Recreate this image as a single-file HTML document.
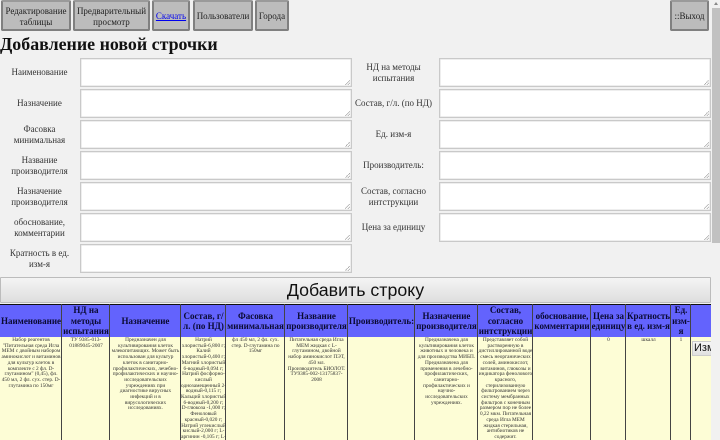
<!DOCTYPE html>
<html lang="ru"><head><meta charset="utf-8"><title>Добавление новой строчки</title>
<style>
html,body{margin:0;padding:0;width:720px;height:440px;overflow:hidden;background:#f1f1f1;}
body{font-family:"Liberation Serif","Noto Serif CJK SC",serif;color:#222;position:relative;}
#wrap{position:absolute;left:0;top:0;width:720px;height:440px;overflow:hidden;filter:blur(.35px);}
.b{position:absolute;top:0;height:25px;padding-top:2px;box-sizing:content-box;background:#bcbcbc;border:2px solid #808080;border-top-color:#9a9a9a;border-radius:2px;font-size:9px;line-height:10.2px;text-align:center;display:flex;align-items:center;justify-content:center;color:#222;}
.b a{color:#0000ee;text-decoration:underline;}
h1{position:absolute;left:0;top:34px;margin:0;font-size:17.9px;line-height:20px;font-weight:bold;color:#111;white-space:nowrap;}
.ta{position:absolute;width:270px;height:27px;background:#fff;border:1px solid #c9c9c9;box-shadow:inset 0 0 0 .5px #ddd;}
.ta:after{content:"";position:absolute;right:1px;bottom:1px;width:5px;height:5px;background:linear-gradient(135deg,transparent 45%,#aaa 45%,#aaa 55%,transparent 55%,transparent 72%,#aaa 72%,#aaa 82%,transparent 82%);}
.l{position:absolute;font-size:9px;line-height:10.2px;text-align:center;display:flex;align-items:center;justify-content:center;height:29px;color:#333;white-space:nowrap;}
#add{position:absolute;left:0;top:277px;width:711px;height:26px;box-sizing:border-box;background:linear-gradient(#f4f4f4,#dedede);border:1px solid #bcbcbc;font-family:"Liberation Sans",sans-serif;font-size:17.8px;line-height:24px;text-align:center;color:#111;border-radius:1px;}
#sb{position:absolute;left:712px;top:0;width:8px;height:243px;background:#f1f1f1;}
#sb i{position:absolute;left:0;top:8px;width:8px;height:235px;background:#c1c1c1;}
#sb b{position:absolute;left:2px;top:2px;width:0;height:0;border-left:2px solid transparent;border-right:2px solid transparent;border-bottom:3px solid #888;}
#t{position:absolute;left:0;top:304px;width:711px;height:136px;background:#fdfdd6;overflow:hidden;}
#h{position:absolute;left:0;top:0;width:711px;height:33px;background:#6363fd;border-top:1px solid #111;box-sizing:border-box;}
.c{position:absolute;top:0;height:136px;border-right:1px solid #444;box-sizing:content-box;}
.hc{position:absolute;top:1px;height:32px;font-weight:bold;font-size:9px;line-height:10.4px;text-align:center;color:#0a0a33;display:flex;align-items:center;justify-content:center;white-space:nowrap;}
.d{position:absolute;top:34px;font-size:5.3px;line-height:5.7px;text-align:center;color:#333;white-space:nowrap;}
#ed{position:absolute;left:692px;top:341px;width:19px;height:15px;background:linear-gradient(#f6f6f6,#e0e0e0);border:1px solid #ccc;border-right:0;box-sizing:border-box;font-family:"Liberation Sans",sans-serif;font-size:11px;line-height:13px;overflow:hidden;white-space:nowrap;padding-left:1px;color:#111;}
</style></head><body><div id="wrap">
<div class="b" style="left:1px;width:66px;">Редактирование<br>таблицы</div>
<div class="b" style="left:73px;width:73px;">Предварительный<br>просмотр</div>
<div class="b" style="left:152px;width:34px;"><a href="#">Скачать</a></div>
<div class="b" style="left:193px;width:56px;">Пользователи</div>
<div class="b" style="left:255px;width:30px;">Города</div>
<div class="b" style="left:670px;width:35px;">::Выход</div>
<h1>Добавление новой строчки</h1>

<div class="ta" style="left:80px;top:58px"></div><div class="ta" style="left:80px;top:89px"></div><div class="ta" style="left:80px;top:120px"></div><div class="ta" style="left:80px;top:151px"></div><div class="ta" style="left:80px;top:182px"></div><div class="ta" style="left:80px;top:213px"></div><div class="ta" style="left:80px;top:244px"></div>
<div class="ta" style="left:439px;top:58px"></div><div class="ta" style="left:439px;top:89px"></div><div class="ta" style="left:439px;top:120px"></div><div class="ta" style="left:439px;top:151px"></div><div class="ta" style="left:439px;top:182px"></div><div class="ta" style="left:439px;top:213px"></div>

<div class="l" style="left:0;top:58px;width:79px">Наименование</div>
<div class="l" style="left:0;top:89px;width:79px">Назначение</div>
<div class="l" style="left:0;top:120px;width:79px">Фасовка<br>минимальная</div>
<div class="l" style="left:0;top:151px;width:79px">Название<br>производителя</div>
<div class="l" style="left:0;top:182px;width:79px">Назначение<br>производителя</div>
<div class="l" style="left:0;top:213px;width:79px">обоснование,<br>комментарии</div>
<div class="l" style="left:0;top:244px;width:79px">Кратность в ед.<br>изм-я</div>
<div class="l" style="left:352px;top:58px;width:83px">НД на методы<br>испытания</div>
<div class="l" style="left:352px;top:89px;width:83px">Состав, г/л. (по НД)</div>
<div class="l" style="left:352px;top:120px;width:83px">Ед. изм-я</div>
<div class="l" style="left:352px;top:151px;width:83px">Производитель:</div>
<div class="l" style="left:352px;top:182px;width:83px">Состав, согласно<br>интструкции</div>
<div class="l" style="left:352px;top:213px;width:83px">Цена за единицу</div>

<div id="add">Добавить строку</div>
<div id="sb"><b></b><i></i></div>

<div id="t">
<div id="h"></div>
<div class="c" style="left:61px"></div><div class="c" style="left:109px"></div><div class="c" style="left:180px"></div><div class="c" style="left:225px"></div><div class="c" style="left:284px"></div><div class="c" style="left:347px"></div><div class="c" style="left:414px"></div><div class="c" style="left:477px"></div><div class="c" style="left:532px"></div><div class="c" style="left:590px"></div><div class="c" style="left:625px"></div><div class="c" style="left:670px"></div><div class="c" style="left:690px"></div>

<div class="hc" style="left:0;width:62px">Наименование</div>
<div class="hc" style="left:62px;width:48px">НД на<br>методы<br>испытания</div>
<div class="hc" style="left:110px;width:71px">Назначение</div>
<div class="hc" style="left:181px;width:45px">Состав, г/<br>л. (по НД)</div>
<div class="hc" style="left:226px;width:59px">Фасовка<br>минимальная</div>
<div class="hc" style="left:285px;width:63px">Название<br>производителя</div>
<div class="hc" style="left:348px;width:67px">Производитель:</div>
<div class="hc" style="left:415px;width:63px">Назначение<br>производителя</div>
<div class="hc" style="left:478px;width:55px">Состав,<br>согласно<br>интструкции</div>
<div class="hc" style="left:533px;width:58px">обоснование,<br>комментарии</div>
<div class="hc" style="left:591px;width:35px">Цена за<br>единицу</div>
<div class="hc" style="left:626px;width:45px">Кратность<br>в ед. изм-я</div>
<div class="hc" style="left:671px;width:20px">Ед.<br>изм-<br>я</div>

<div class="d" style="left:0;width:62px">Набор реагентов<br>"Питательная среда Игла<br>MEM с двойным набором<br>аминокислот и витаминов<br>для культур клеток в<br>комплекте с 2 фл. D-<br>глутамином" (0,45), фл.<br>450 мл, 2 фл. сух. стер. D-<br>глутамина по 150мг</div>
<div class="d" style="left:62px;width:48px">ТУ 9385-013-<br>01889045-2007</div>
<div class="d" style="left:110px;width:71px">Предназначен для<br>культивирования клеток<br>млекопитающих. Может быть<br>использован для культур<br>клеток в санитарно-<br>профилактических, лечебно-<br>профилактических и научно-<br>исследовательских<br>учреждениях при<br>диагностике вирусных<br>инфекций и в<br>вирусологических<br>исследованиях.</div>
<div class="d" style="left:181px;width:45px">Натрий<br>хлористый-6,800 г;<br>Калий<br>хлористый-0,400 г;<br>Магний хлористый<br>6-водный-0,094 г;<br>Натрий фосфорно-<br>кислый<br>однозамещенный 2-<br>водный-0,115 г;<br>Кальций хлористый<br>6-водный-0,200 г;<br>D-глюкоза -1,000 г;<br>Феноловый<br>красный-0,020 г;<br>Натрий углекислый<br>кислый-2,000 г; L-<br>аргинин -0,105 г; L-</div>
<div class="d" style="left:226px;width:59px">фл 450 мл, 2 фл. сух.<br>стер. D-глутамина по<br>150мг</div>
<div class="d" style="left:285px;width:63px">Питательная среда Игла<br>MEM жидкая с L-<br>глутамином, двойной<br>набор аминокислот ПЭТ,<br>450 мл.<br>Производитель БИОЛОТ.<br>ТУ9385-002-13175837-<br>2008</div>
<div class="d" style="left:415px;width:63px">Предназначена для<br>культивирования клеток<br>животных и человека и<br>для производства МИБП.<br>Предназначена для<br>применения в лечебно-<br>профилактических,<br>санитарно-<br>профилактических и<br>научно-<br>исследовательских<br>учреждениях.</div>
<div class="d" style="left:478px;width:55px">Представляет собой<br>растворенную в<br>дистиллированной воде<br>смесь неорганических<br>солей, аминокислот,<br>витаминов, глюкозы и<br>индикатора фенолового<br>красного,<br>стерилизованную<br>фильтрованием через<br>систему мембранных<br>фильтров с конечным<br>размером пор не более<br>0,22 мкм. Питательная<br>среда Игла MEM<br>жидкая стерильная,<br>антибиотиков не<br>содержит.</div>
<div class="d" style="left:591px;width:35px">0</div>
<div class="d" style="left:626px;width:45px">шкалл</div>
<div class="d" style="left:671px;width:20px">1</div>
</div>
<div id="ed">Изменить</div>
</div></body></html>
